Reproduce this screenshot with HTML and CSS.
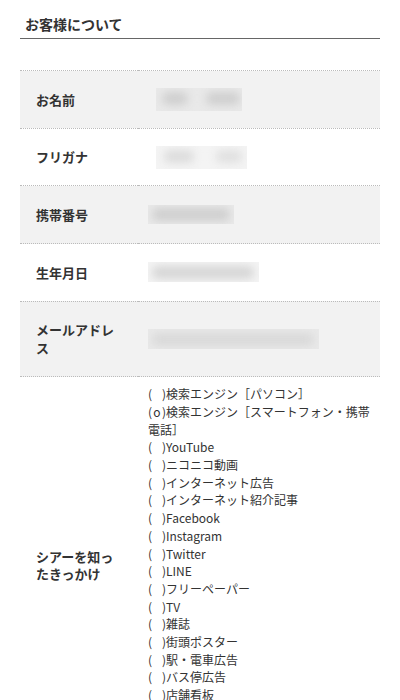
FILE: index.html
```html
<!DOCTYPE html>
<html lang="ja">
<head>
<meta charset="utf-8">
<link rel="stylesheet" href="styles.css">
</head>
<body>
<div class="page">
  <h2 class="heading">お客様について</h2>
  <table class="info">
    <tr class="shade">
      <th>お名前</th>
      <td><span class="blur blur-name"><i class="b1"></i><i class="b2"></i></span></td>
    </tr>
    <tr>
      <th>フリガナ</th>
      <td><span class="blur blur-kana"><i class="b1"></i><i class="b2"></i></span></td>
    </tr>
    <tr class="shade">
      <th>携帯番号</th>
      <td><span class="blur blur-tel"><i class="b1"></i></span></td>
    </tr>
    <tr>
      <th>生年月日</th>
      <td><span class="blur blur-birth"><i class="b1"></i></span></td>
    </tr>
    <tr class="shade">
      <th>メールアドレス</th>
      <td><span class="blur blur-mail"><i class="b1"></i></span></td>
    </tr>
    <tr class="last">
      <th>シアーを知ったきっかけ</th>
      <td>
        <ul class="opts">
          <li><span class="mk">(<span> </span>)</span>検索エンジン［パソコン］</li>
          <li><span class="mk">(<span>o</span>)</span>検索エンジン［スマートフォン・携帯電話］</li>
          <li><span class="mk">(<span> </span>)</span>YouTube</li>
          <li><span class="mk">(<span> </span>)</span>ニコニコ動画</li>
          <li><span class="mk">(<span> </span>)</span>インターネット広告</li>
          <li><span class="mk">(<span> </span>)</span>インターネット紹介記事</li>
          <li><span class="mk">(<span> </span>)</span>Facebook</li>
          <li><span class="mk">(<span> </span>)</span>Instagram</li>
          <li><span class="mk">(<span> </span>)</span>Twitter</li>
          <li><span class="mk">(<span> </span>)</span>LINE</li>
          <li><span class="mk">(<span> </span>)</span>フリーペーパー</li>
          <li><span class="mk">(<span> </span>)</span>TV</li>
          <li><span class="mk">(<span> </span>)</span>雑誌</li>
          <li><span class="mk">(<span> </span>)</span>街頭ポスター</li>
          <li><span class="mk">(<span> </span>)</span>駅・電車広告</li>
          <li><span class="mk">(<span> </span>)</span>バス停広告</li>
          <li><span class="mk">(<span> </span>)</span>店舗看板</li>
          <li><span class="mk">(<span> </span>)</span>知人の紹介</li>
          <li><span class="mk">(<span> </span>)</span>その他</li>
        </ul>
      </td>
    </tr>
  </table>
</div>
</body>
</html>
```

FILE: styles.css
```css
html, body {
  margin: 0;
  padding: 0;
  background: #fff;
}
body {
  font-family: "Noto Sans CJK JP", "Open Sans", sans-serif;
  color: #333;
}
.page {
  padding: 0 20px;
}
.heading {
  margin: 0;
  padding: 14px 0 4px 5px;
  font-size: 14px;
  line-height: 20px;
  font-weight: bold;
  color: #333;
  border-bottom: 1px solid #666;
}
.info {
  margin-top: 31px;
  width: 100%;
  border-collapse: collapse;
  font-size: 13px;
  line-height: 17.7px;
}
.info tr {
  border-top: 1px dotted #bbb;
  border-bottom: 1px dotted #bbb;
}
.info tr.shade {
  background: #f2f2f2;
}
.info th {
  width: 86px;
  padding: 19.5px 16px;
  text-align: left;
  vertical-align: middle;
  font-weight: bold;
}
.info td {
  padding: 6px 10px;
  vertical-align: middle;
}
.info tr.last td {
  padding: 8px 10px 14px 10px;
}
.opts {
  list-style: none;
  margin: 0;
  padding: 0;
  font-size: 12px;
  line-height: 17.7px;
}
.mk {
  display: inline-flex;
  justify-content: space-between;
  width: 18px;
}
.mk span {
  white-space: pre;
}
.blur {
  display: block;
  position: relative;
  overflow: hidden;
  height: 21px;
  background: #e9e9e9;
}
.blur i {
  position: absolute;
  top: 4px;
  height: 13px;
  background: #cfcfcf;
  filter: blur(4px);
  border-radius: 6px;
}
tr:not(.shade) .blur {
  background: #f4f4f4;
}
.blur-name { width: 86px; margin-left: 8px; height: 23px; }
.blur-name .b1 { left: 6px; width: 26px; }
.blur-name .b2 { left: 50px; width: 34px; }
.blur-kana { width: 91px; margin-left: 8px; height: 23px; }
.blur-kana .b1 { left: 8px; width: 30px; background: #dcdcdc; }
.blur-kana .b2 { left: 60px; width: 26px; background: #e0e0e0; }
.blur-tel { width: 86px; height: 19px; }
.blur-tel .b1 { left: 4px; width: 78px; top: 3px; }
.blur-birth { width: 111px; height: 20px; }
.blur-birth .b1 { left: 4px; width: 102px; top: 4px; background: #d6d6d6; }
.blur-mail { width: 171px; height: 20px; }
.blur-mail .b1 { left: 4px; width: 162px; top: 4px; background: #d9d9d9; }
```
